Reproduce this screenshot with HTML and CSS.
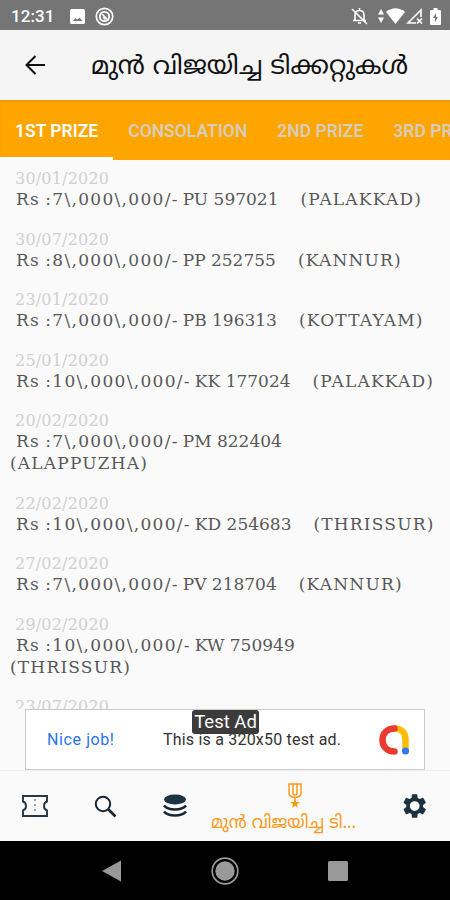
FILE: index.html
```html
<!DOCTYPE html>
<html lang="ml">
<head>
  <meta charset="UTF-8" />
  <meta name="viewport" content="width=device-width, initial-scale=1" />
  <title>മുൻ വിജയിച്ച ടിക്കറ്റുകൾ</title>
  <link rel="stylesheet" href="styles.css">
</head>
<body>

  <div class="status-bar">
    <span class="clock">12:31</span>
    <svg class="status-image" width="15" height="15" viewBox="0 0 15 15">
      <path fill="#fff" fill-rule="evenodd" d="M1.500 0h12A1.500 1.500 0 0 1 15 1.500v12A1.500 1.500 0 0 1 13.500 15h-12A1.500 1.500 0 0 1 0 13.500v-12A1.500 1.500 0 0 1 1.500 0zM3 12h9.500L9.500 8.500 7.500 10.800 5.500 9z"/>
    </svg>
    <svg class="status-app" width="19" height="19" viewBox="0 0 19 19" fill="none" stroke="#fff">
      <circle cx="9.500" cy="9.500" r="8.200" stroke-width="1.700"/>
      <circle cx="9.500" cy="9.500" r="4.700" stroke-width="1.800"/>
      <path d="M7 7l6.500 6.500M8 10l2.500 2.500" stroke-width="1.700"/>
    </svg>
    <div class="status-right">
      <svg width="17" height="18" viewBox="0 0 17 18" fill="none" stroke="#fff" stroke-width="1.600">
        <path d="M4 13.500V8c0-3 1.800-4.500 4.500-4.500S13 5 13 8v5.500M2 13.500h13M8.500 1v2.500M7 16h3M1 2l15 15"/>
      </svg>
      <svg class="status-data" width="6" height="14" viewBox="0 0 6 14">
        <path fill="#fff" d="M0 5.500L3 0l3 5.500zM0 8.500h6L3 14z"/>
      </svg>
      <svg width="19" height="16" viewBox="0 0 19 16">
        <path fill="#fff" d="M0 4Q9.500-3.500 19 4L9.500 16z"/>
      </svg>
      <svg class="status-signal" width="17" height="16" viewBox="0 0 17 16" fill="none" stroke="#fff" stroke-width="1.600">
        <path d="M10 15H2L15 2v7M11 10.500l5 5M16 10.500l-5 5"/>
      </svg>
      <svg class="status-battery" width="11" height="17" viewBox="0 0 11 17">
        <path fill="#fff" fill-rule="evenodd" d="M3.500 0h4v2H10q1 0 1 1v13q0 1-1 1H1q-1 0-1-1V3q0-1 1-1h2.500zM6 5L3 10h2v4l3-5H6z"/>
      </svg>
    </div>
  </div>

  <header class="app-bar">
    <svg class="back" width="20" height="20" viewBox="0 0 20 20" fill="none" stroke="#111" stroke-width="2">
      <path d="M20 10H2M10.500 1L1.500 10l9 9"/>
    </svg>
    <svg class="title" width="320" height="48" viewBox="0 0 320 48">
      <text x="1" y="33" textLength="317" lengthAdjust="spacingAndGlyphs">മുൻ വിജയിച്ച ടിക്കറ്റുകൾ</text>
    </svg>
  </header>

  <nav class="tabs">
    <a class="tab active">1ST PRIZE</a>
    <a class="tab">CONSOLATION</a>
    <a class="tab">2ND PRIZE</a>
    <a class="tab">3RD PRIZE</a>
  </nav>

  <main class="results">
    <div class="result">
      <div class="date">30/01/2020</div>
      <div class="line"><span class="amount">Rs :7\,000\,000/-</span><span class="ticket">PU 597021</span><span class="place">(PALAKKAD)</span></div>
    </div>
    <div class="result">
      <div class="date">30/07/2020</div>
      <div class="line"><span class="amount">Rs :8\,000\,000/-</span><span class="ticket">PP 252755</span><span class="place">(KANNUR)</span></div>
    </div>
    <div class="result">
      <div class="date">23/01/2020</div>
      <div class="line"><span class="amount">Rs :7\,000\,000/-</span><span class="ticket">PB 196313</span><span class="place">(KOTTAYAM)</span></div>
    </div>
    <div class="result">
      <div class="date">25/01/2020</div>
      <div class="line"><span class="amount">Rs :10\,000\,000/-</span><span class="ticket">KK 177024</span><span class="place">(PALAKKAD)</span></div>
    </div>
    <div class="result">
      <div class="date">20/02/2020</div>
      <div class="line"><span class="amount">Rs :7\,000\,000/-</span><span class="ticket">PM 822404</span></div>
      <div class="wrapped">(ALAPPUZHA)</div>
    </div>
    <div class="result">
      <div class="date">22/02/2020</div>
      <div class="line"><span class="amount">Rs :10\,000\,000/-</span><span class="ticket">KD 254683</span><span class="place">(THRISSUR)</span></div>
    </div>
    <div class="result">
      <div class="date">27/02/2020</div>
      <div class="line"><span class="amount">Rs :7\,000\,000/-</span><span class="ticket">PV 218704</span><span class="place">(KANNUR)</span></div>
    </div>
    <div class="result">
      <div class="date">29/02/2020</div>
      <div class="line"><span class="amount">Rs :10\,000\,000/-</span><span class="ticket">KW 750949</span></div>
      <div class="wrapped">(THRISSUR)</div>
    </div>
    <div class="result">
      <div class="date">23/07/2020</div>
    </div>
  </main>

  <div class="ad-row">
    <div class="ad">
      <span class="ad-link">Nice job!</span>
      <span class="ad-text">This is a 320x50 test ad.</span>
      <svg class="ad-logo" width="32" height="32" viewBox="0 0 32 32" fill="none" stroke-width="6.500" stroke-linecap="round">
        <path stroke="#fbbc04" d="M17 4.500c6 0 10.500 4 10.500 11V25"/>
        <path stroke="#ea3b30" d="M16.500 4.500C9 4.500 4.500 9.500 4.500 16S9 27.500 16.500 27.500"/>
        <circle cx="27.500" cy="27" r="3.600" fill="#3478f0" stroke="none"/>
      </svg>
      <span class="ad-badge">Test Ad</span>
    </div>
  </div>

  <nav class="bottom-nav">
    <a class="nav-item">
      <svg width="26" height="22" viewBox="0 0 26 22" fill="none" stroke="#263845" stroke-width="1.900">
        <path d="M1 1h24v5.500q-3 1-3 4.500t3 4.500V21H1v-5.500q3-1 3-4.500T1 6.500z"/>
        <path stroke="#9aa3a9" stroke-dasharray="2 3" d="M13 4v15"/>
      </svg>
    </a>
    <a class="nav-item">
      <svg width="23" height="23" viewBox="0 0 23 23" fill="none" stroke="#172630">
        <circle cx="9" cy="9" r="7.200" stroke-width="2"/>
        <path stroke-width="2.600" d="M14.500 14.500l7 7"/>
      </svg>
    </a>
    <a class="nav-item">
      <svg width="24" height="24" viewBox="0 0 24 24" fill="none" stroke="#172630" stroke-width="2.600">
        <ellipse cx="12" cy="5.500" rx="11" ry="5" fill="#1d3341" stroke="none"/>
        <path d="M1 11.500q3 4 11 4t11-4M1 17.500q3 4 11 4t11-4"/>
      </svg>
    </a>
    <a class="nav-item active">
      <svg width="14" height="25" viewBox="0 0 14 25" fill="none" stroke="#f99a1c" stroke-width="1.500">
        <path d="M1 1h12v9q0 4-6 4.500Q1 14 1 10zM5 1v9q0 2 2 2t2-2V1M7 14v4"/>
        <path fill="#f99a1c" stroke="none" d="M7 16l1.300 3H12l-3 2.200 1 3.500-3-2-3 2 1-3.500L2 19h3.700z"/>
      </svg>
      <svg class="nav-label" width="148" height="26" viewBox="0 0 148 26">
        <text x="1" y="17" textLength="145" lengthAdjust="spacingAndGlyphs">മുൻ വിജയിച്ച ടി...</text>
      </svg>
    </a>
    <a class="nav-item">
      <svg width="26" height="26" viewBox="0 0 24 24" fill="#1d303d">
        <path d="M19.400 13a7.500 7.500 0 0 0 0-2l2.300-1.800c.3-.2.300-.5.200-.7l-2.200-3.800c-.2-.3-.4-.3-.7-.2l-2.700 1.100a8 8 0 0 0-1.800-1L14.100 1.700c0-.3-.2-.5-.5-.5H9.700c-.3 0-.5.200-.5.500l-.4 2.900A8 8 0 0 0 7 5.600L4.300 4.500c-.3-.1-.5 0-.7.200L1.500 8.500c-.1.200-.1.500.2.700L4 11a7.500 7.500 0 0 0 0 2l-2.300 1.800c-.3.200-.3.500-.2.700l2.100 3.800c.2.300.4.300.7.200L7 18.400c.6.400 1.100.8 1.800 1l.4 2.900c0 .3.200.5.500.5h3.900c.3 0 .5-.2.500-.5l.4-2.900c.7-.2 1.200-.6 1.800-1l2.700 1.100c.3.100.5.100.7-.2l2.200-3.800c.1-.2.100-.5-.2-.7zM11.700 16.500a4.500 4.500 0 1 1 0-9 4.500 4.500 0 0 1 0 9z" fill-rule="evenodd"/>
      </svg>
    </a>
  </nav>

  <footer class="system-nav">
    <svg width="20" height="22" viewBox="0 0 20 22"><path fill="#999" d="M0 11L19 0.500v21z"/></svg>
    <svg width="28" height="28" viewBox="0 0 28 28">
      <circle cx="14" cy="14" r="12.800" fill="none" stroke="#999" stroke-width="1.700"/>
      <circle cx="14" cy="14" r="9.700" fill="#999"/>
    </svg>
    <svg width="20" height="20" viewBox="0 0 20 20"><rect width="20" height="20" rx="1.500" fill="#999"/></svg>
  </footer>

</body>
</html>
```
FILE: styles.css
```css
* {
  box-sizing: border-box;
}

body {
  margin: 0;
  width: 450px;
  height: 900px;
  display: flex;
  flex-direction: column;
  overflow: hidden;
  background: #fafafa;
  font-family: Roboto, sans-serif;
}

svg {
  display: block;
  flex: none;
}

.status-bar {
  height: 30px;
  flex: none;
  display: flex;
  align-items: center;
  padding: 2px 9px 0 11px;
  background: #757575;
  color: #fff;
}

.clock {
  width: 59px;
  font-size: 17px;
  font-weight: 500;
  letter-spacing: 0.1px;
}

.status-app {
  margin-left: 10px;
}

.status-right {
  margin-left: auto;
  display: flex;
  align-items: center;
}

.status-data {
  margin-left: 10px;
  margin-right: 2px;
}

.status-signal {
  margin-left: 1px;
}

.status-battery {
  margin-left: 7px;
}

.app-bar {
  height: 70px;
  flex: none;
  display: flex;
  align-items: center;
  padding-left: 25px;
  background: #f5f5f5;
}

.title {
  margin-left: 45px;
  font-family: "Noto Sans Malayalam", "Noto Sans", sans-serif;
  font-size: 25px;
  fill: #111;
}

.tabs {
  height: 60px;
  flex: none;
  display: flex;
  overflow: hidden;
  background: #ffa500;
  box-shadow: inset 0 2px 1px #eb9b0b;
}

.tab {
  flex: none;
  padding: 20px 15px 0;
  font-size: 17.5px;
  line-height: 22px;
  font-weight: 600;
  color: #d6cdbb;
  white-space: nowrap;
}

.tab.active {
  color: #fff;
  border-bottom: 3px solid #fff;
}

.results {
  flex: 1;
  min-height: 0;
  overflow: hidden;
  padding-top: 10px;
  font-family: "DejaVu Serif", serif;
  white-space: nowrap;
}

.result {
  padding: 0 0 20.5px 10px;
}

.date {
  padding-left: 5px;
  font-size: 16px;
  line-height: 18px;
  letter-spacing: 0.2px;
  color: #d0d0d0;
}

.line,
.wrapped {
  font-size: 17px;
  line-height: 22px;
  color: #585858;
}

.line {
  padding-left: 6px;
}

.amount {
  margin-right: 4px;
  letter-spacing: 1.3px;
  word-spacing: -1.5px;
}

.place {
  margin-left: 22px;
}

.place,
.wrapped {
  letter-spacing: 1.2px;
}

.ad-row {
  height: 61px;
  flex: none;
  display: flex;
  justify-content: center;
}

.ad {
  position: relative;
  width: 400px;
  display: flex;
  align-items: center;
  padding-left: 21px;
  border: 1px solid #c9cdcd;
  background: #fff;
  font-size: 16px;
}

.ad-link {
  width: 116px;
  color: #2874ed;
  letter-spacing: 0.6px;
}

.ad-text {
  width: 215px;
  color: #333;
  letter-spacing: 0.2px;
}

.ad-badge {
  position: absolute;
  top: 0;
  left: 166px;
  width: 67px;
  height: 24px;
  border-radius: 3px;
  background: #3b3b3b;
  color: #fff;
  font-size: 18.5px;
  line-height: 24px;
  text-align: center;
}

.bottom-nav {
  height: 71px;
  flex: none;
  display: flex;
  border-top: 1px solid #eee;
  background: #fafafa;
}

.nav-item {
  width: 70px;
  display: flex;
  flex-direction: column;
  align-items: center;
  justify-content: center;
}

.nav-item.active {
  width: 170px;
  justify-content: flex-start;
  padding: 12px 0 0;
}

.nav-label {
  margin-top: 3px;
  margin-right: 22px;
  font-family: "Noto Sans Malayalam", "Noto Sans", sans-serif;
  font-size: 18px;
  fill: #f99a1c;
}

.system-nav {
  height: 59px;
  flex: none;
  display: flex;
  align-items: center;
  justify-content: space-between;
  padding: 0 102px;
  background: #000;
}
```
